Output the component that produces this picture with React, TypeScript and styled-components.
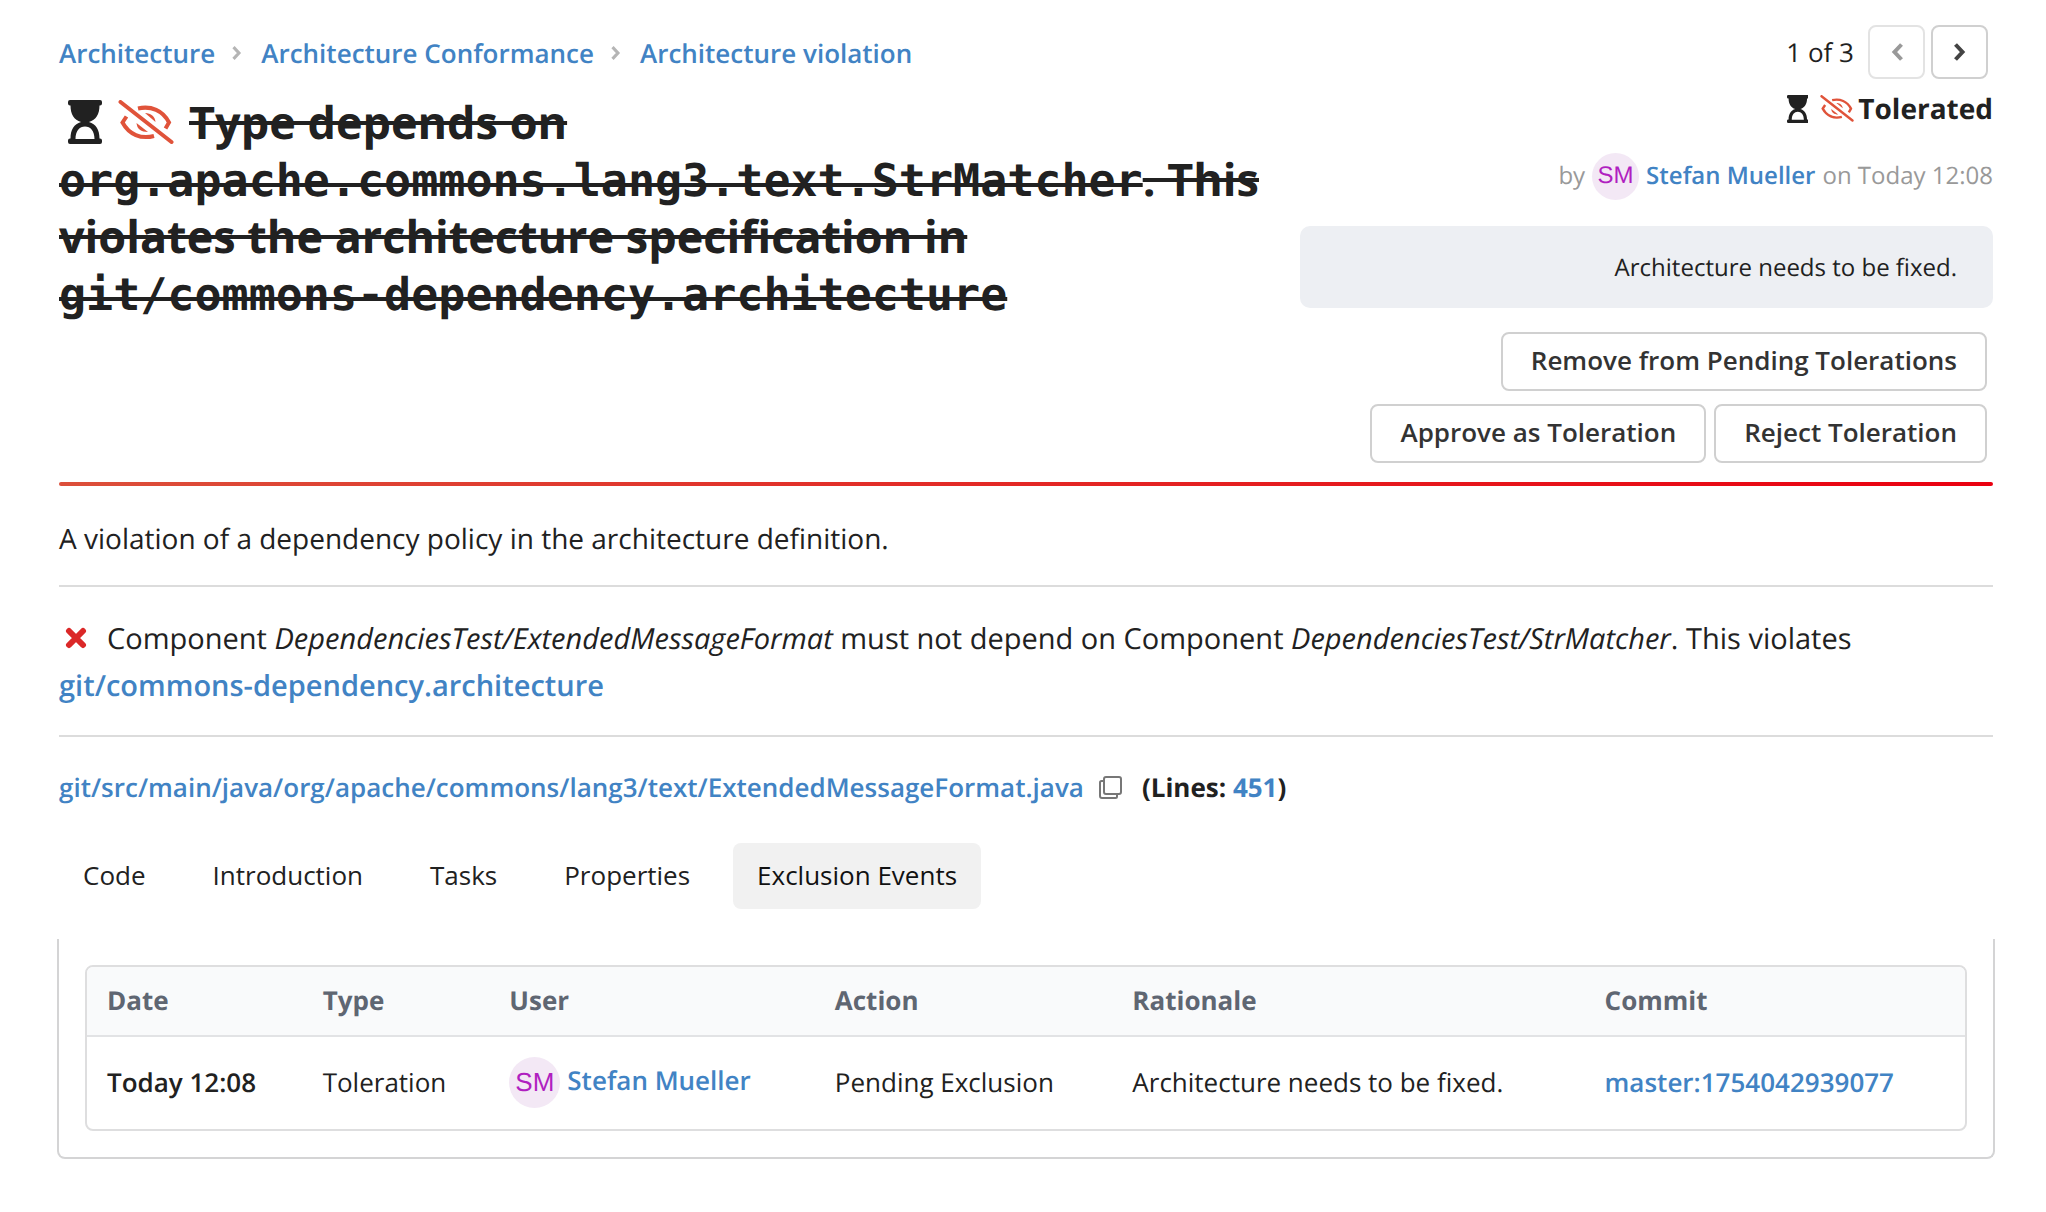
import React from 'react';
import styled, { createGlobalStyle } from 'styled-components';

const Global = createGlobalStyle`
  * { box-sizing: border-box; }
  body {
    margin: 0; background: #fff; color: #212121; font-family: "Open Sans", "Noto Sans", sans-serif;
    font-size: 26px; line-height: 36px; text-rendering: geometricPrecision; font-kerning: normal;
  }
`;
const mono = '"DejaVu Sans Mono", monospace';

const Page = styled.main` padding: 24px 53px 54px 59px; `;
const Link = styled.a<{ $weight?: number }>` color: #4183c4; text-decoration: none; font-weight: ${p => p.$weight ?? 600}; `;
const Header = styled.header`
  display: flex; justify-content: space-between; gap: 32px; padding-bottom: 19px;
`;
const Left = styled.div` flex: 1; max-width: 1210px; padding-top: 11px; `;
const Crumbs = styled.nav` display: flex; align-items: center; gap: 17px; margin-bottom: 23px; line-height: 36px; `;
const Title = styled.h1` margin: 0; font-size: 45px; line-height: 57px; font-weight: 700; `;
const TitleIcons = styled.span` display: inline-flex; gap: 16px; padding: 0 15px 0 9px; vertical-align: -5px; `;
const Code = styled.code` font-family: ${mono}; font-size: 45px; line-height: 1; `;
const Right = styled.div` width: 693px; display: flex; flex-direction: column; align-items: flex-end; `;
const Pager = styled.div` display: flex; align-items: center; gap: 6px; padding: 1px 5px 0 0; `;
const Count = styled.span` margin-right: 8px; `;
const Outline = styled.button`
  font: inherit; font-weight: 600; color: #333; background: #fff; border: 2px solid #d0d0d0; border-radius: 8px;
  height: 59px; padding: 0 28px 4px; display: flex; align-items: center; justify-content: center;
`;
const PageButton = styled(Outline)`
  width: 57px; height: 54px; padding: 0; color: #444; &:disabled { border-color: #e3e3e3; color: #999; }
`;
const Status = styled.div` display: flex; align-items: center; gap: 4px; font-weight: 700; font-size: 28px; margin-top: 12px; `;
const StatusIcons = styled.span` display: flex; gap: 12px; `;
const ByLine = styled.div` display: flex; align-items: center; gap: 7px; color: #999; font-size: 24px; margin-top: 25px; height: 48px; `;
const Avatar = styled.span<{ $size: number }>`
  display: inline-flex; align-items: center; justify-content: center; width: ${p => p.$size}px; height: ${p => p.$size}px;
  border-radius: 50%; background: #f3e8f5; color: #b01fc0; font: 400 ${p => p.$size > 50 ? 26 : 24}px/1 "Liberation Sans", sans-serif;
`;
const Note = styled.div`
  align-self: stretch; margin: 26px 0 24px; padding: 24px 36px 22px; border-radius: 10px; background: #edeff3; text-align: right; font-size: 24px;
`;
const Actions = styled.div` display: flex; flex-wrap: wrap; justify-content: flex-end; gap: 13px 8px; padding-right: 6px; `;
const RedLine = styled.div` height: 4px; border-radius: 2px; background: linear-gradient(90deg, #dc4f3a, #ea0010); `;
const Section = styled.section<{ $pad: string; $size?: number; $line?: number }>`
  padding: ${p => p.$pad}; border-bottom: 2px solid #dcdcdc; font-size: ${p => p.$size ?? 28}px; line-height: ${p => p.$line ?? 36}px;
`;
const CrossBox = styled.span` display: inline-flex; padding: 0 20px 0 6px; `;
const FileRow = styled.div` display: flex; align-items: center; padding: 32px 0 38px; font-weight: 700; `;
const CopyButton = styled.button` display: flex; border: 0; padding: 0; margin: 0 20px 0 14px; background: none; `;
const Tabs = styled.div` display: flex; gap: 19px; margin-bottom: 30px; `;
const Tab = styled.button`
  font: inherit; color: #212121; border: 0; border-radius: 8px; background: none; height: 66px; padding: 0 24px 2px;
  &[aria-selected='true'] { background: #f1f1f1; color: #111; }
`;
const Panel = styled.div`
  margin: 0 -2px; padding: 26px 26px; border: 2px solid #d4d4d5; border-top: 0; border-radius: 0 0 8px 8px;
`;
const Table = styled.table`
  width: 100%; border: 2px solid #dededf; border-radius: 8px; border-spacing: 0; overflow: hidden; table-layout: fixed;
  th, td { text-align: left; padding: 0 20px 2px; white-space: nowrap; }
  th { height: 70px; background: #f9fafb; color: #5f6672; font-weight: 700; border-bottom: 2px solid #e2e3e5; }
  td { height: 92px; }
  td:first-child { font-weight: 600; }
`;
const User = styled.span` display: flex; align-items: center; gap: 7px; a { padding-bottom: 4px; } `;

function Hourglass({ h }: { h: number }) {
  return (
    <svg width={(h * 34) / 44} height={h} viewBox="0 0 34 44" fill="currentColor" aria-hidden="true">
      <path fillRule="evenodd" d="M2 0h30a2 2 0 0 1 2 2v1.500a2 2 0 0 1-2 2h-.5C31.500 14 28 20 21 22c7 2 10.500 8 10.500 16.500h.5a2 2 0 0 1 2 2V42a2 2 0 0 1-2 2H2a2 2 0 0 1-2-2v-1.500a2 2 0 0 1 2-2h.5C2.500 30 6 24 13 22 6 20 2.500 14 2.500 5.500H2a2 2 0 0 1-2-2V2a2 2 0 0 1 2-2zM7.500 39h19c0-8-4-12.500-9.500-12.500S7.500 31 7.500 39z" />
    </svg>
  );
}
function EyeOff({ w }: { w: number }) {
  return (
    <svg width={w} height={(w * 44) / 56} viewBox="0 0 56 44" fill="none" stroke="#e0533a" strokeWidth="4" aria-hidden="true">
      <path strokeLinecap="round" d="M2.500 2l51 40" />
      <path d="M20 8.500C33 5.500 45 10.500 51 22.500L47.500 28.500M8.500 16.500L4.500 22.500C11 34.500 23 39.500 36 36" />
      <g fill="#e0533a" stroke="none">
        <path d="M27 13c6 0 10 3.500 10.500 9z" />
        <path d="M18.500 23l11.500 9c-7 0-11-3-11.500-9z" />
      </g>
    </svg>
  );
}
function Chevron({ left, width = 4 }: { left?: boolean; width?: number }) {
  return (
    <svg width="12" height="18" viewBox="0 0 12 18" fill="none" stroke="currentColor" strokeWidth={width} aria-hidden="true">
      <path d={left ? 'M10.500 1.500L3.500 9l7 7.500' : 'M1.500 1.500L8.500 9l-7 7.500'} />
    </svg>
  );
}
const Sep = styled.span` display: flex; width: 12px; color: #b5b5b5; svg { width: 10px; height: 14px; } `;

const tabs = ['Code', 'Introduction', 'Tasks', 'Properties', 'Exclusion Events'];
const columns: [string, number][] = [['Date', 216], ['Type', 187], ['User', 326], ['Action', 298], ['Rationale', 473], ['Commit', 381]];

export default function App() {
  return (
    <Page>
      <Global />
      <Header>
        <Left>
          <Crumbs aria-label="Breadcrumb">
            <Link href="#a">Architecture</Link>
            <Sep><Chevron /></Sep>
            <Link href="#b">Architecture Conformance</Link>
            <Sep><Chevron /></Sep>
            <Link href="#c">Architecture violation</Link>
          </Crumbs>
          <Title>
            <TitleIcons><Hourglass h={44} /><EyeOff w={56} /></TitleIcons>
            <s>Type depends on <Code>org.apache.commons.lang3.text.StrMatcher</Code>. This violates the architecture specification in <Code>git/commons-dependency.architecture</Code></s>
          </Title>
        </Left>
        <Right>
          <Pager>
            <Count>1 of 3</Count>
            <PageButton disabled aria-label="Previous"><Chevron left /></PageButton>
            <PageButton aria-label="Next"><Chevron /></PageButton>
          </Pager>
          <Status><StatusIcons><Hourglass h={28} /><EyeOff w={34} /></StatusIcons>Tolerated</Status>
          <ByLine>by <Avatar $size={47}>SM</Avatar><Link href="#user">Stefan Mueller</Link> on Today 12:08</ByLine>
          <Note>Architecture needs to be fixed.</Note>
          <Actions>
            <Outline>Remove from Pending Tolerations</Outline>
            <Outline>Approve as Toleration</Outline>
            <Outline>Reject Toleration</Outline>
          </Actions>
        </Right>
      </Header>
      <RedLine />
      <Section $pad="35px 0 28px">A violation of a dependency policy in the architecture definition.</Section>
      <Section $pad="28px 0 26px" $size={29} $line={47}>
        <CrossBox>
          <svg width="22" height="22" viewBox="0 0 22 22" stroke="#db2828" strokeWidth="6" strokeLinecap="round" aria-hidden="true"><path d="M4 4l14 14M18 4L4 18" /></svg>
        </CrossBox>
        Component <em>DependenciesTest/ExtendedMessageFormat</em> must not depend on Component <em>DependenciesTest/StrMatcher</em>. This violates <Link href="#arch">git/commons-dependency.architecture</Link>
      </Section>
      <FileRow>
        <Link href="#file">git/src/main/java/org/apache/commons/lang3/text/ExtendedMessageFormat.java</Link>
        <CopyButton aria-label="Copy path">
          <svg width="24" height="24" viewBox="0 0 24 24" fill="none" stroke="#777" strokeWidth="2" aria-hidden="true"><rect x="6" y="2" width="17" height="17" rx="2" /><path d="M6 6H3.500A1.500 1.500 0 0 0 2 7.500V21a2 2 0 0 0 2 2h13.500a1.500 1.500 0 0 0 1.500-1.500V19" /></svg>
        </CopyButton>
        <span>(Lines: <Link $weight={700} href="#line">451</Link>)</span>
      </FileRow>
      <Tabs role="tablist">
        {tabs.map(t => <Tab key={t} role="tab" aria-selected={t === 'Exclusion Events'}>{t}</Tab>)}
      </Tabs>
      <Panel role="tabpanel">
        <Table>
          <colgroup>{columns.map(([n, w]) => <col key={n} style={{ width: `${(w / 1881) * 100}%` }} />)}</colgroup>
          <thead><tr>{columns.map(([n]) => <th key={n} scope="col">{n}</th>)}</tr></thead>
          <tbody>
            <tr>
              <td>Today 12:08</td>
              <td>Toleration</td>
              <td><User><Avatar $size={51}>SM</Avatar><Link href="#user">Stefan Mueller</Link></User></td>
              <td>Pending Exclusion</td>
              <td>Architecture needs to be fixed.</td>
              <td><Link href="#commit">master:1754042939077</Link></td>
            </tr>
          </tbody>
        </Table>
      </Panel>
    </Page>
  );
}
